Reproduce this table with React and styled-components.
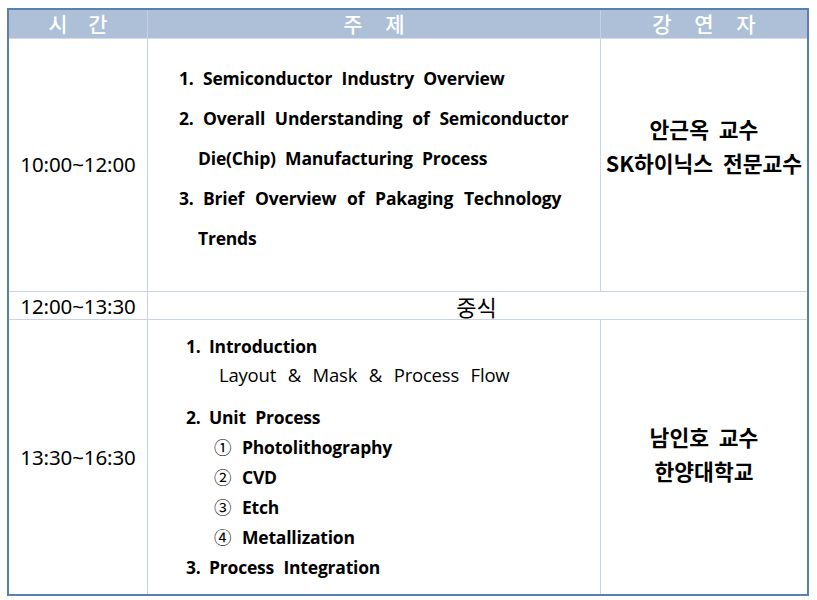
import React from "react";
import styled, {createGlobalStyle} from "styled-components";

const GlobalStyle = createGlobalStyle`
    html, body {
        margin: 0;
        padding: 0;
        background: #ffffff;
    }
    body {
        font-family: "Open Sans", "Noto Sans CJK KR", sans-serif;
        color: #000000;
    }
`;

const Table = styled.div`
    margin: 8px 0 0 7px;
    width: 802px;
    box-sizing: border-box;
    border: 2px solid #5b7fae;
    display: grid;
    grid-template-columns: 139px 453px 206px;
    grid-template-rows: 29px 253px 28px 274px;
`;

const HeadCell = styled.div`
    background: #adc0d7;
    color: #ffffff;
    font-family: "Noto Sans CJK KR", sans-serif;
    font-size: 21px;
    font-weight: 500;
    letter-spacing: ${p => p.$spacing || 8}px;
    display: flex;
    align-items: center;
    justify-content: center;
    white-space: pre;
    box-sizing: border-box;
    border-bottom: 1px solid #d3dde9;
    border-right: ${p => p.$last ? "none" : "1px solid #c3d1e2"};
    padding-left: ${p => p.$spacing || 8}px;
    padding-bottom: 2px;
`;

const Cell = styled.div`
    box-sizing: border-box;
    border-bottom: ${p => p.$bottom === false ? "none" : "1px solid #c8d4e3"};
    border-right: ${p => p.$last ? "none" : "1px solid #c8d4e3"};
    grid-column: ${p => p.$span || "auto"};
    display: flex;
    flex-direction: column;
    justify-content: ${p => p.$top ? "flex-start" : "center"};
    align-items: ${p => p.$left ? "flex-start" : "center"};
    padding: ${p => p.$pad || "0"};
`;

const Time = styled.span`
    font-family: "Noto Sans", "Noto Sans CJK KR", sans-serif;
    font-size: 20.5px;
    letter-spacing: -0.1px;
    margin-bottom: ${p => p.$lift || 0}px;
`;

const Lunch = styled.span`
    font-family: "Noto Sans CJK KR", sans-serif;
    font-size: 22px;
    padding-right: 2px;
`;

const Line = styled.div`
    font-size: ${p => p.$light ? 18.5 : 17.5}px;
    font-weight: ${p => p.$light ? 400 : 700};
    line-height: ${p => p.$lh || 40}px;
    word-spacing: ${p => p.$ws ?? 5}px;
    padding-left: ${p => p.$indent || 0}px;
    margin-top: ${p => p.$gap || 0}px;
    white-space: pre;
    display: flex;
    letter-spacing: -0.2px;
`;

const Num = styled.span`
    display: inline-block;
    width: ${p => p.$w || 24}px;
`;

const Circled = styled.span`
    display: inline-block;
    width: 28px;
    font-family: "Noto Sans CJK KR", sans-serif;
    font-weight: 400;
    font-size: 17.5px;
`;

const Speaker = styled.div`
    font-family: "Noto Sans CJK KR", sans-serif;
    font-size: 21.5px;
    font-weight: 700;
    line-height: 34px;
    word-spacing: 5px;
    text-align: center;
`;

const SpeakerBox = styled.div`
    margin-bottom: ${p => p.$lift || 0}px;
`;

const App = () => {
    return (
        <>
            <GlobalStyle/>
            <Table>
                <HeadCell $spacing={8}>{"시 간"}</HeadCell>
                <HeadCell $spacing={9}>{"주 제"}</HeadCell>
                <HeadCell $spacing={9} $last>{"강 연 자"}</HeadCell>

                <Cell><Time $lift={3}>10:00~12:00</Time></Cell>
                <Cell $top $left $pad="19px 0 0 31px">
                    <Line><Num $w={24}>1.</Num>Semiconductor Industry Overview</Line>
                    <Line $ws={5.5}><Num $w={24}>2.</Num>Overall Understanding of Semiconductor</Line>
                    <Line $indent={19}>Die(Chip) Manufacturing Process</Line>
                    <Line $ws={6.5}><Num $w={24}>3.</Num>Brief Overview of Pakaging Technology</Line>
                    <Line $indent={19}>Trends</Line>
                </Cell>
                <Cell $last>
                    <SpeakerBox $lift={38}>
                        <Speaker>안근옥 교수</Speaker>
                        <Speaker>SK하이닉스 전문교수</Speaker>
                    </SpeakerBox>
                </Cell>

                <Cell><Time>12:00~13:30</Time></Cell>
                <Cell $span="2 / 4" $last><Lunch>중식</Lunch></Cell>

                <Cell $bottom={false}><Time>13:30~16:30</Time></Cell>
                <Cell $bottom={false} $top $left $pad="11px 0 0 38px">
                    <Line $lh={30}><Num $w={23}>1.</Num>Introduction</Line>
                    <Line $lh={28} $light $ws={7} $indent={33}>Layout &amp; Mask &amp; Process Flow</Line>
                    <Line $lh={30} $gap={13}><Num $w={23}>2.</Num>Unit Process</Line>
                    <Line $lh={30} $indent={28}><Circled>①</Circled>Photolithography</Line>
                    <Line $lh={30} $indent={28}><Circled>②</Circled>CVD</Line>
                    <Line $lh={30} $indent={28}><Circled>③</Circled>Etch</Line>
                    <Line $lh={30} $indent={28}><Circled>④</Circled>Metallization</Line>
                    <Line $lh={30}><Num $w={23}>3.</Num>Process Integration</Line>
                </Cell>
                <Cell $bottom={false} $last>
                    <SpeakerBox $lift={6}>
                        <Speaker>남인호 교수</Speaker>
                        <Speaker>한양대학교</Speaker>
                    </SpeakerBox>
                </Cell>
            </Table>
        </>
    );
};

export default App;
